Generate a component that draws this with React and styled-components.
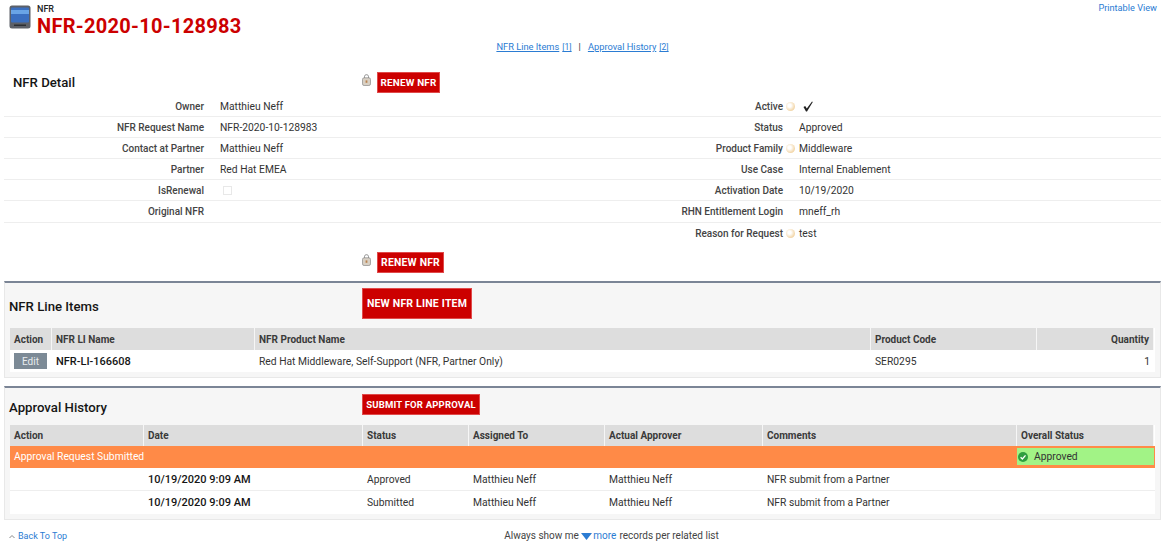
import React from "react";
import styled, { createGlobalStyle } from "styled-components";

const GlobalStyle = createGlobalStyle`
  html, body {
    margin: 0;
    padding: 0;
    background: #fff;
    font-family: "Roboto", "Liberation Sans", sans-serif;
    font-size: 10.3px;
    color: #333;
  }
`;

const Page = styled.div`
  width: 1165px;
  height: 553px;
  overflow: hidden;
  display: flex;
  flex-direction: column;
`;

const PageHeader = styled.header`
  height: 41px;
  display: flex;
  align-items: flex-start;
  padding: 4px 8px 0 9px;
  box-sizing: border-box;
`;

const ObjectSvg = styled.svg`
  flex: none;
  margin-top: 1px;
`;

const TitleBox = styled.div`
  margin-left: 6px;
  flex: 1;
`;

const ObjectType = styled.div`
  font-size: 9px;
  font-weight: 500;
  line-height: 10px;
  color: #222;
`;

const RecordName = styled.h1`
  margin: 1px 0 0;
  font-size: 20px;
  line-height: 22px;
  font-weight: 700;
  letter-spacing: 0.3px;
  color: #cc0000;
`;

const Link = styled.a`
  color: #2b7cd3;
  text-decoration: ${(p) => (p.$underline ? "underline" : "none")};
`;

const PrintLink = styled(Link)`
  font-size: 9.2px;
  line-height: 7px;
`;

const JumpBar = styled.nav`
  height: 12px;
  line-height: 12px;
  display: flex;
  justify-content: center;
  gap: 7px;
  font-size: 9.3px;
`;

const Count = styled.span`
  font-size: 8.5px;
  margin-left: 3px;
`;

const SectionHead = styled.div`
  height: ${(p) => p.$height}px;
  display: flex;
  align-items: ${(p) => p.$align || "center"};
  padding-left: ${(p) => p.$pad}px;
  margin-bottom: ${(p) => p.$after || 0}px;
  box-sizing: border-box;
`;

const SectionTitle = styled.h2`
  margin: ${(p) => p.$drop || 0}px 0 0;
  width: ${(p) => p.$width}px;
  padding-bottom: ${(p) => p.$lift || 0}px;
  font-size: 13.2px;
  font-weight: 500;
  color: #151515;
  flex: none;
`;

const Lock = styled.svg`
  width: 9px;
  height: 12px;
  margin: 0 6px 7px 0;
  flex: none;
`;

const RedButton = styled.button`
  height: ${(p) => p.$height || 21}px;
  width: ${(p) => p.$width}px;
  margin-bottom: ${(p) => p.$raise || 0}px;
  padding: 0;
  border: 1px solid #e04a4a;
  background: #cc0000;
  color: #fff;
  font-family: inherit;
  font-size: ${(p) => p.$size || 9.5}px;
  font-weight: 700;
  letter-spacing: 0.2px;
  white-space: nowrap;
`;

const DetailGrid = styled.div`
  margin: 0 4px;
`;

const DetailRow = styled.div`
  height: 21.1px;
  display: grid;
  grid-template-columns: 216px 363px 216px 1fr;
  align-items: center;
  border-bottom: ${(p) => (p.$last ? "none" : "1px solid #eee")};
  box-sizing: border-box;
`;

const Label = styled.div`
  text-align: right;
  padding-right: 16px;
  font-weight: 500;
  color: #444;
  font-size: 10px;
`;

const LabelText = styled.span`
  position: relative;
`;

const Help = styled.i`
  position: absolute;
  left: calc(100% + 3px);
  top: 1px;
  width: 9px;
  height: 9px;
  border-radius: 50%;
  background: radial-gradient(circle at 40% 40%, #fff 20%, #f2d5a6 70%, #e6c693 100%);
`;

const Value = styled.div`
  color: #333;
  padding-left: ${(p) => p.$indent || 0}px;
  display: flex;
  align-items: center;
`;

const EmptyBox = styled.span`
  width: 7px;
  height: 7px;
  border: 1px solid #e8e8e8;
  margin-left: 3px;
`;

const RelatedBlock = styled.section`
  margin: 8px 4px 0;
  padding-bottom: 5px;
  background: #f6f6f6;
  border: 1px solid #e8e8e8;
  border-top: 2px solid #7b8596;
  box-sizing: border-box;
`;

const DataTable = styled.div`
  margin: 0 5px;
  background: #fff;
`;

const Row = styled.div`
  display: grid;
  grid-template-columns: ${(p) => p.$cols};
  height: ${(p) => p.$height}px;
  align-items: center;
  border-bottom: ${(p) => (p.$line ? "1px solid #eee" : "none")};
  box-sizing: border-box;
`;

const HeadCell = styled.div`
  height: 100%;
  display: flex;
  align-items: center;
  justify-content: ${(p) => (p.$right ? "flex-end" : "flex-start")};
  padding: 0 4px;
  background: #dddddd;
  border-right: 1px solid #f6f6f6;
  box-sizing: border-box;
  font-size: 10px;
  font-weight: 700;
  color: #3a3a3a;
`;

const Cell = styled.div`
  padding: 0 4px;
  text-align: ${(p) => (p.$right ? "right" : "left")};
  color: #333;
  white-space: nowrap;
`;

const StrongCell = styled(Cell)`
  font-weight: 500;
  font-size: 11px;
  color: #151515;
`;

const EditButton = styled.button`
  width: 33px;
  height: 16px;
  padding: 0;
  border: none;
  background: #7c8a96;
  color: #e8ecef;
  font-family: inherit;
  font-size: 10px;
`;

const BannerRow = styled.div`
  height: 22px;
  display: grid;
  grid-template-columns: 1007px 137px;
  align-items: center;
  background: #ff8a47;
`;

const BannerText = styled.div`
  padding: 0 0 2px 4px;
  color: #fff;
`;

const OverallOk = styled.div`
  height: 17px;
  margin-bottom: 1px;
  display: flex;
  align-items: center;
  gap: 6px;
  padding-left: 1px;
  background: #a2f386;
  color: #333;
`;

const Footer = styled.footer`
  position: relative;
  margin-top: 10px;
  padding-left: 58px;
  display: flex;
  justify-content: center;
  line-height: 12px;
  font-size: 10px;
  color: #444;
`;

const BackToTop = styled(Link)`
  position: absolute;
  left: 9px;
  top: 0;
  font-size: 9px;
  display: flex;
  align-items: center;
  gap: 3px;
`;

const MoreLink = styled(Link)`
  margin-right: 3px;
`;

const MoreArrow = styled.svg`
  margin-right: 1px;
  vertical-align: -1px;
`;

const LockIcon = () => (
  <Lock viewBox="0 0 9 12">
    <path d="M2.5 4V2.6C2.5 1.4 3.4.7 4.5.7s2 .7 2 1.9V4" fill="none" stroke="#8a8a8a" strokeWidth="1" />
    <rect x=".5" y="3.8" width="8" height="7.7" rx="1.6" fill="#d8d0c4" stroke="#8a8a8a" strokeWidth=".7" />
    <rect x="3.6" y="6.4" width="1.8" height="2.4" fill="#b9824f" />
  </Lock>
);

const ObjectIcon = () => (
  <ObjectSvg width="22" height="24" viewBox="0 0 22 24">
    <rect x=".5" y=".5" width="21" height="23" rx="2.5" fill="#5c6068" />
    <rect x="2" y="2.5" width="18" height="15" rx="1" fill="#3a6fc0" />
    <rect x="2" y="5" width="18" height="4" fill="#69a4e6" />
    <rect x="5" y="19.5" width="12" height="1.5" fill="#2b2e33" />
  </ObjectSvg>
);

const detail = [
  ["Owner", "Matthieu Neff", "Active", "check", true],
  ["NFR Request Name", "NFR-2020-10-128983", "Status", "Approved"],
  ["Contact at Partner", "Matthieu Neff", "Product Family", "Middleware", true],
  ["Partner", "Red Hat EMEA", "Use Case", "Internal Enablement"],
  ["IsRenewal", "box", "Activation Date", "10/19/2020"],
  ["Original NFR", "", "RHN Entitlement Login", "mneff_rh"],
  ["", "", "Reason for Request", "test", true],
];

const lineCols = "42px 203px 616px 166px 117px";
const approvalCols = "134px 219px 106px 136px 158px 254px 137px";

const approvals = [
  ["10/19/2020 9:09 AM", "Approved"],
  ["10/19/2020 9:09 AM", "Submitted"],
];

const App = () => (
  <Page>
    <GlobalStyle />
    <PageHeader>
      <ObjectIcon />
      <TitleBox>
        <ObjectType>NFR</ObjectType>
        <RecordName>NFR-2020-10-128983</RecordName>
      </TitleBox>
      <PrintLink>Printable View</PrintLink>
    </PageHeader>

    <JumpBar>
      <span>
        <Link $underline>NFR Line Items</Link>
        <Link $underline><Count>[1]</Count></Link>
      </span>
      <span>|</span>
      <span>
        <Link $underline>Approval History</Link>
        <Link $underline><Count>[2]</Count></Link>
      </span>
    </JumpBar>

    <SectionHead $height={40} $pad={13} $align="flex-end" $after={3}>
      <SectionTitle $width={349} $lift={3}>NFR Detail</SectionTitle>
      <LockIcon />
      <RedButton $width={63} $size={9.9}>RENEW NFR</RedButton>
    </SectionHead>

    <DetailGrid>
      {detail.map(([label, value, label2, value2, help], i) => (
        <DetailRow key={i} $last={i === detail.length - 1}>
          <Label>{label}</Label>
          <Value>{value === "box" ? <EmptyBox /> : value}</Value>
          <Label>
            <LabelText>
              {label2}
              {help && <Help />}
            </LabelText>
          </Label>
          {value2 === "check" ? (
            <Value $indent={4}>
              <svg width="10" height="11" viewBox="0 0 10 11">
                <path d="M.5 6 2.2 5 3.8 7.6 9 .5l.8.5L4 10.5H3z" fill="#222" />
              </svg>
            </Value>
          ) : (
            <Value>{value2}</Value>
          )}
        </DetailRow>
      ))}
    </DetailGrid>

    <SectionHead $height={29.7} $pad={362} $align="flex-end">
      <LockIcon />
      <RedButton $width={67} $size={10.4}>RENEW NFR</RedButton>
    </SectionHead>

    <RelatedBlock>
      <SectionHead $height={45} $pad={4}>
        <SectionTitle $width={353} $drop={2}>NFR Line Items</SectionTitle>
        <RedButton $width={110} $height={31} $size={10.5} $raise={4}>NEW NFR LINE ITEM</RedButton>
      </SectionHead>
      <DataTable>
        <Row $cols={lineCols} $height={22}>
          <HeadCell>Action</HeadCell>
          <HeadCell>NFR LI Name</HeadCell>
          <HeadCell>NFR Product Name</HeadCell>
          <HeadCell>Product Code</HeadCell>
          <HeadCell $right>Quantity</HeadCell>
        </Row>
        <Row $cols={lineCols} $height={22}>
          <Cell><EditButton>Edit</EditButton></Cell>
          <StrongCell>NFR-LI-166608</StrongCell>
          <Cell>Red Hat Middleware, Self-Support (NFR, Partner Only)</Cell>
          <Cell>SER0295</Cell>
          <Cell $right>1</Cell>
        </Row>
      </DataTable>
    </RelatedBlock>

    <RelatedBlock>
      <SectionHead $height={37} $pad={4}>
        <SectionTitle $width={353} $drop={2}>Approval History</SectionTitle>
        <RedButton $width={118} $raise={4}>SUBMIT FOR APPROVAL</RedButton>
      </SectionHead>
      <DataTable>
        <Row $cols={approvalCols} $height={21}>
          <HeadCell>Action</HeadCell>
          <HeadCell>Date</HeadCell>
          <HeadCell>Status</HeadCell>
          <HeadCell>Assigned To</HeadCell>
          <HeadCell>Actual Approver</HeadCell>
          <HeadCell>Comments</HeadCell>
          <HeadCell>Overall Status</HeadCell>
        </Row>
        <BannerRow>
          <BannerText>Approval Request Submitted</BannerText>
          <OverallOk>
            <svg width="10" height="10" viewBox="0 0 10 10">
              <circle cx="5" cy="5" r="5" fill="#2f9e3f" />
              <path d="M2.6 5.2 4.4 7 7.5 3.4" fill="none" stroke="#fff" strokeWidth="1.3" />
            </svg>
            Approved
          </OverallOk>
        </BannerRow>
        {approvals.map(([date, status], i) => (
          <Row key={status} $cols={approvalCols} $height={23} $line={i === 0}>
            <Cell />
            <StrongCell>{date}</StrongCell>
            <Cell>{status}</Cell>
            <Cell>Matthieu Neff</Cell>
            <Cell>Matthieu Neff</Cell>
            <Cell>NFR submit from a Partner</Cell>
            <Cell />
          </Row>
        ))}
      </DataTable>
    </RelatedBlock>

    <Footer>
      <BackToTop>
        <svg width="6" height="5" viewBox="0 0 6 5">
          <path d="M.5 4 3 1.5 5.5 4" fill="none" stroke="#888" strokeWidth="1" />
        </svg>
        Back To Top
      </BackToTop>
      <span>
        Always show me
        <MoreLink>
          {" "}
          <MoreArrow width="11" height="7" viewBox="0 0 11 7">
            <path d="M0 0h11L5.5 7z" fill="#2b7cd3" />
          </MoreArrow>
          more
        </MoreLink>
        records per related list
      </span>
    </Footer>
  </Page>
);

export default App;
